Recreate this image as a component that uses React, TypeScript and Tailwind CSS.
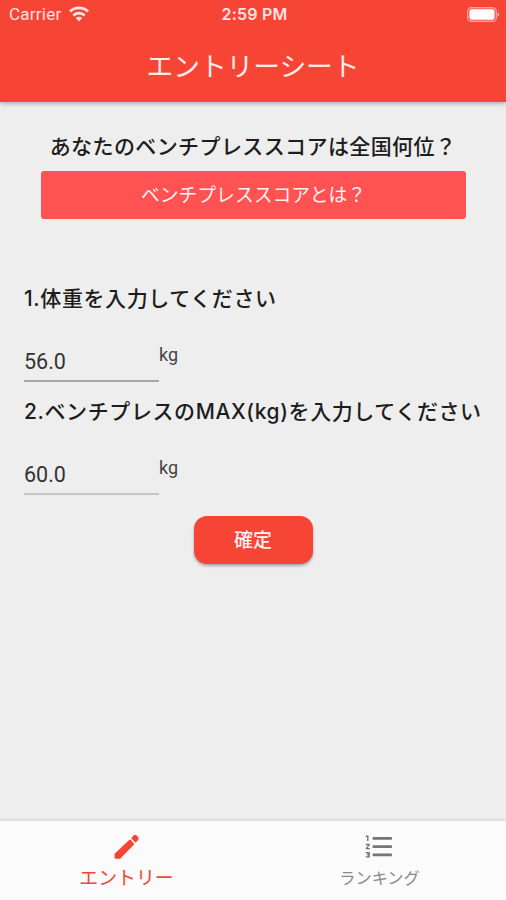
import React, { useState } from "react";
import { MdFormatListNumbered } from "react-icons/md";
import { clsx } from "clsx";

interface WeightFieldProps {
  label: string;
  value: string;
  onChange: (value: string) => void;
  className?: string;
  lineClassName?: string;
}

const WeightField = ({ label, value, onChange, className, lineClassName }: WeightFieldProps) => (
  <div className={className}>
    <label className="block h-8 pt-px text-[21px] leading-8 font-medium tracking-[0.6px] whitespace-nowrap">
      {label}
    </label>
    <div className="mt-[26px] flex h-[42px] items-start font-[Roboto,sans-serif]">
      <input
        className={clsx(
          "h-[42px] w-[135px] border-b-2 bg-transparent pt-[2px] text-[21.5px] text-[#333] outline-none",
          lineClassName
        )}
        value={value}
        inputMode="decimal"
        aria-label={label}
        onChange={(e) => onChange(e.target.value)}
      />
      <span className="pt-[2px] text-[18px] leading-[26px] text-[#444]">kg</span>
    </div>
  </div>
);

const StatusBar = () => (
  <div className="grid h-7 grid-cols-3 items-center pr-1.5 pl-[9px] text-[16px] leading-7 text-white/85">
    <div className="flex items-center gap-[7px]">
      <span className="font-[Roboto,sans-serif] text-[17px] tracking-[0.25px]">Carrier</span>
      <svg width="20" height="16" viewBox="0 0 20 16" fill="none" stroke="currentColor" strokeWidth="2.8">
        <path d="M1 5.6a12.8 12.8 0 0 1 18 0" />
        <path d="M4.4 9.5a8 8 0 0 1 11.2 0" />
        <path d="M10 15.5l-3.2-3.4a4.6 4.6 0 0 1 6.4 0z" fill="currentColor" stroke="none" />
      </svg>
    </div>
    <span className="text-center font-semibold tracking-[0.2px]">2:59 PM</span>
    <svg className="justify-self-end" width="33" height="15" viewBox="0 0 33 15">
      <rect x="0.7" y="0.7" width="28.6" height="13.6" rx="3.6" fill="none" stroke="#fff" strokeOpacity="0.5" strokeWidth="1.4" />
      <rect x="2.4" y="2.2" width="25.2" height="10.6" rx="2.2" fill="#fff" />
      <path d="M30.6 5.2c2.2.8 2.2 3.8 0 4.6z" fill="#fff" fillOpacity="0.6" />
    </svg>
  </div>
);

const PencilIcon = () => (
  <svg width="32" height="32" viewBox="0 0 32 32" fill="currentColor">
    <path d="M18.4 8.7q.5-.5 1 0l3.6 3.7q.5.5 0 1L9.4 27.4q-.3.3-.8.3H4.5q-.9 0-.9-.9v-3.5q0-.5.3-.8z" />
    <path d="M20.6 6.7l2-2.1q1.5-1.5 3 0l1.5 1.5q1.5 1.5 0 3l-2 2.1q-.5.5-1 0l-3.5-3.5q-.5-.5 0-1z" />
  </svg>
);

export default function App() {
  const [bodyWeight, setBodyWeight] = useState("56.0");
  const [benchMax, setBenchMax] = useState("60.0");

  return (
    <div className="flex h-[900px] w-[506px] flex-col overflow-hidden bg-[#eeeeee] font-[Inter,'Noto_Sans_CJK_JP',sans-serif] text-[#1d1d1d]">
      <header className="h-[102px] shrink-0 bg-[#f64435] shadow-[0_2px_4px_rgba(0,0,0,0.25)]">
        <StatusBar />
        <h1 className="h-[74px] text-center text-[26.7px] leading-[76px] text-white/90">エントリーシート</h1>
      </header>

      <main className="flex flex-1 flex-col px-6">
        <h2 className="mt-[29px] h-8 text-center text-[21px] leading-8 font-medium tracking-[0.4px] whitespace-nowrap">
          あなたのベンチプレススコアは全国何位？
        </h2>
        <button className="mr-4 ml-[17px] mt-[8px] h-[48px] rounded-[3px] bg-[#ff5252] pt-[3px] text-[18.8px] text-white/95">
          ベンチプレススコアとは？
        </button>

        <WeightField
          className="mt-[63px]"
          label="1.体重を入力してください"
          value={bodyWeight}
          onChange={setBodyWeight}
          lineClassName="border-[#a6a6a6]"
        />
        <WeightField
          className="mt-[13px]"
          label="2.ベンチプレスのMAX(kg)を入力してください"
          value={benchMax}
          onChange={setBenchMax}
          lineClassName="border-[#c6c6c6]"
        />

        <button className="mt-[21px] h-[48px] w-[119px] self-center rounded-[13px] bg-[#f64435] pt-[3px] text-[19px] font-medium text-white/95 shadow-[0_2px_3px_rgba(0,0,0,0.3)]">
          確定
        </button>
      </main>

      <nav className="grid h-[79px] shrink-0 grid-cols-2 bg-[#fbfbfb] shadow-[0_-1px_3px_rgba(0,0,0,0.12)]">
        <button className="flex flex-col items-center pt-[10px] text-[#f64435]">
          <PencilIcon />
          <span className="text-[18.9px] leading-[31px]">エントリー</span>
        </button>
        <button className="flex flex-col items-center pt-[9px] text-[#757575]">
          <MdFormatListNumbered size={33} />
          <span className="text-[16.2px] leading-[31px] text-[#8a8a8a]">ランキング</span>
        </button>
      </nav>
    </div>
  );
}
